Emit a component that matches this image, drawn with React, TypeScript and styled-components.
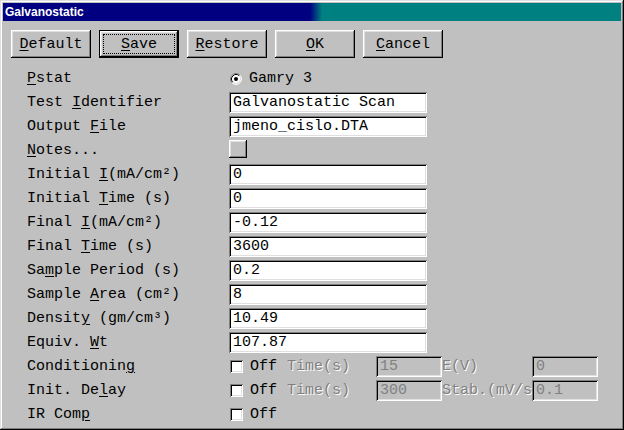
import React from "react";
import styled, { createGlobalStyle } from "styled-components";

const GlobalStyle = createGlobalStyle`
    html, body {
        margin: 0;
        padding: 0;
        width: 624px;
        height: 430px;
        overflow: hidden;
        background: #c0c0c0;
    }
    #root {
        width: 624px;
        height: 430px;
    }
`;

type Row = {
    label: React.ReactNode;
    value: string;
};

const RadioMark = () => (
    <svg width="12" height="12" viewBox="0 0 12 12">
        <circle cx="6" cy="6" r="5" fill="#fff" />
        <path d="M2.11 9.89 A5.5 5.5 0 0 1 9.89 2.11" fill="none" stroke="#808080" />
        <path d="M9.89 2.11 A5.5 5.5 0 0 1 2.11 9.89" fill="none" stroke="#fff" />
        <path d="M2.82 9.18 A4.5 4.5 0 0 1 9.18 2.82" fill="none" stroke="#000" />
        <path d="M9.18 2.82 A4.5 4.5 0 0 1 2.82 9.18" fill="none" stroke="#dfdfdf" />
        <circle cx="6" cy="6" r="2" fill="#000" />
    </svg>
);

const App = () => {
    const fields: Row[] = [
        { label: <>Initial <Key>I</Key>(mA/cm²)</>, value: "0" },
        { label: <>Initial <Key>T</Key>ime (s)</>, value: "0" },
        { label: <>Final <Key>I</Key>(mA/cm²)</>, value: "-0.12" },
        { label: <>Final <Key>T</Key>ime (s)</>, value: "3600" },
        { label: <>Sa<Key>m</Key>ple Period (s)</>, value: "0.2" },
        { label: <>Sample <Key>A</Key>rea (cm²)</>, value: "8" },
        { label: <>Densit<Key>y</Key> (gm/cm³)</>, value: "10.49" },
        { label: <>Equiv. <Key>W</Key>t</>, value: "107.87" },
    ];

    return (
        <>
            <GlobalStyle />
            <Window>
                <TitleBar>Galvanostatic</TitleBar>

                <Toolbar>
                    <Button><Key>D</Key>efault</Button>
                    <Button $default><Key>S</Key>ave</Button>
                    <Button><Key>R</Key>estore</Button>
                    <Button><Key>O</Key>K</Button>
                    <Button><Key>C</Key>ancel</Button>
                </Toolbar>

                <Form>
                    <Label><Key>P</Key>stat</Label>
                    <Controls>
                        <RadioMark />
                        <OptionText>Gamry 3</OptionText>
                    </Controls>

                    <Label>Test <Key>I</Key>dentifier</Label>
                    <TextBox>Galvanostatic Scan</TextBox>

                    <Label>Output <Key>F</Key>ile</Label>
                    <TextBox>jmeno_cislo.DTA</TextBox>

                    <Label><Key>N</Key>otes...</Label>
                    <div>
                        <NotesButton />
                    </div>

                    {fields.map((f, i) => (
                        <React.Fragment key={i}>
                            <Label>{f.label}</Label>
                            <TextBox>{f.value}</TextBox>
                        </React.Fragment>
                    ))}

                    <Label>Conditionin<Key>g</Key></Label>
                    <Controls>
                        <CheckBox />
                        <OffText>Off</OffText>
                        <DimLabel $width={89}>Time(s)</DimLabel>
                        <SmallBox>15</SmallBox>
                        <DimLabel $width={90}>E(V)</DimLabel>
                        <SmallBox>0</SmallBox>
                    </Controls>

                    <Label>Init. De<Key>l</Key>ay</Label>
                    <Controls>
                        <CheckBox />
                        <OffText>Off</OffText>
                        <DimLabel $width={89}>Time(s)</DimLabel>
                        <SmallBox>300</SmallBox>
                        <DimLabel $width={90}>Stab.(mV/s)</DimLabel>
                        <SmallBox>0.1</SmallBox>
                    </Controls>

                    <Label>IR Com<Key>p</Key></Label>
                    <Controls>
                        <CheckBox />
                        <OffText>Off</OffText>
                    </Controls>
                </Form>
            </Window>
        </>
    );
};

export default App;

const mono = `"Liberation Mono", "Courier New", monospace`;

const Window = styled.div`
    box-sizing: border-box;
    width: 624px;
    height: 430px;
    padding: 3px;
    background: #c0c0c0;
    box-shadow: inset -1px -1px #000, inset 1px 1px #dfdfdf,
        inset -2px -2px #808080, inset 2px 2px #fff;
    font-family: ${mono};
    font-size: 15px;
    color: #000;
`;

const TitleBar = styled.div`
    height: 18px;
    line-height: 18px;
    padding-left: 2px;
    background: linear-gradient(
        90deg,
        #000080 0,
        #000080 307px,
        #008080 319px,
        #008080 100%
    );
    color: #fff;
    font-family: "Liberation Sans", Arial, sans-serif;
    font-weight: bold;
    font-size: 12px;
`;

const Toolbar = styled.div`
    display: flex;
    gap: 8px;
    padding: 9px 0 0 8px;
`;

const Key = styled.u`
    text-decoration: underline;
    text-underline-offset: 2px;
`;

const Button = styled.button<{ $default?: boolean }>`
    position: relative;
    box-sizing: border-box;
    width: 80px;
    height: 28px;
    padding: 1px 0 0;
    background: #c0c0c0;
    font-family: ${mono};
    font-size: 15px;
    color: #000;
    border: ${(p) => (p.$default ? "1px solid #000" : "none")};
    box-shadow: inset -1px -1px #000, inset 1px 1px #fff,
        inset -2px -2px #808080, inset 2px 2px #dfdfdf;

    &::after {
        content: "";
        display: ${(p) => (p.$default ? "block" : "none")};
        position: absolute;
        inset: 3px;
        border: 1px dotted #000;
    }
`;

const Form = styled.div`
    display: grid;
    grid-template-columns: 202px 1fr;
    grid-auto-rows: 21px;
    row-gap: 3px;
    padding: 10px 0 0 24px;
`;

const Label = styled.div`
    line-height: 21px;
    white-space: nowrap;
`;

const Controls = styled.div`
    display: flex;
    align-items: center;
    padding-left: 1px;
`;

const OptionText = styled.span`
    margin-left: 7px;
`;

const sunken = `
    box-shadow: inset 1px 1px #808080, inset -1px -1px #fff,
        inset 2px 2px #000, inset -2px -2px #dfdfdf;
`;

const TextBox = styled.div`
    box-sizing: border-box;
    width: 198px;
    height: 21px;
    line-height: 21px;
    padding-left: 4px;
    background: #fff;
    white-space: nowrap;
    ${sunken}
`;

const NotesButton = styled.div`
    width: 18px;
    height: 18px;
    background: #c0c0c0;
    box-shadow: inset -1px -1px #000, inset 1px 1px #fff,
        inset -2px -2px #808080, inset 2px 2px #dfdfdf;
`;

const CheckBox = styled.div`
    flex: none;
    width: 13px;
    height: 13px;
    background: #fff;
    ${sunken}
`;

const OffText = styled.span`
    width: 37px;
    margin-left: 7px;
`;

const DimLabel = styled.span<{ $width: number }>`
    width: ${(p) => p.$width}px;
    overflow: hidden;
    white-space: nowrap;
    color: #808080;
    text-shadow: 1px 1px 0 #fff;
`;

const SmallBox = styled.div`
    flex: none;
    box-sizing: border-box;
    width: 66px;
    height: 21px;
    line-height: 21px;
    padding-left: 4px;
    background: #c0c0c0;
    color: #808080;
    ${sunken}
`;
